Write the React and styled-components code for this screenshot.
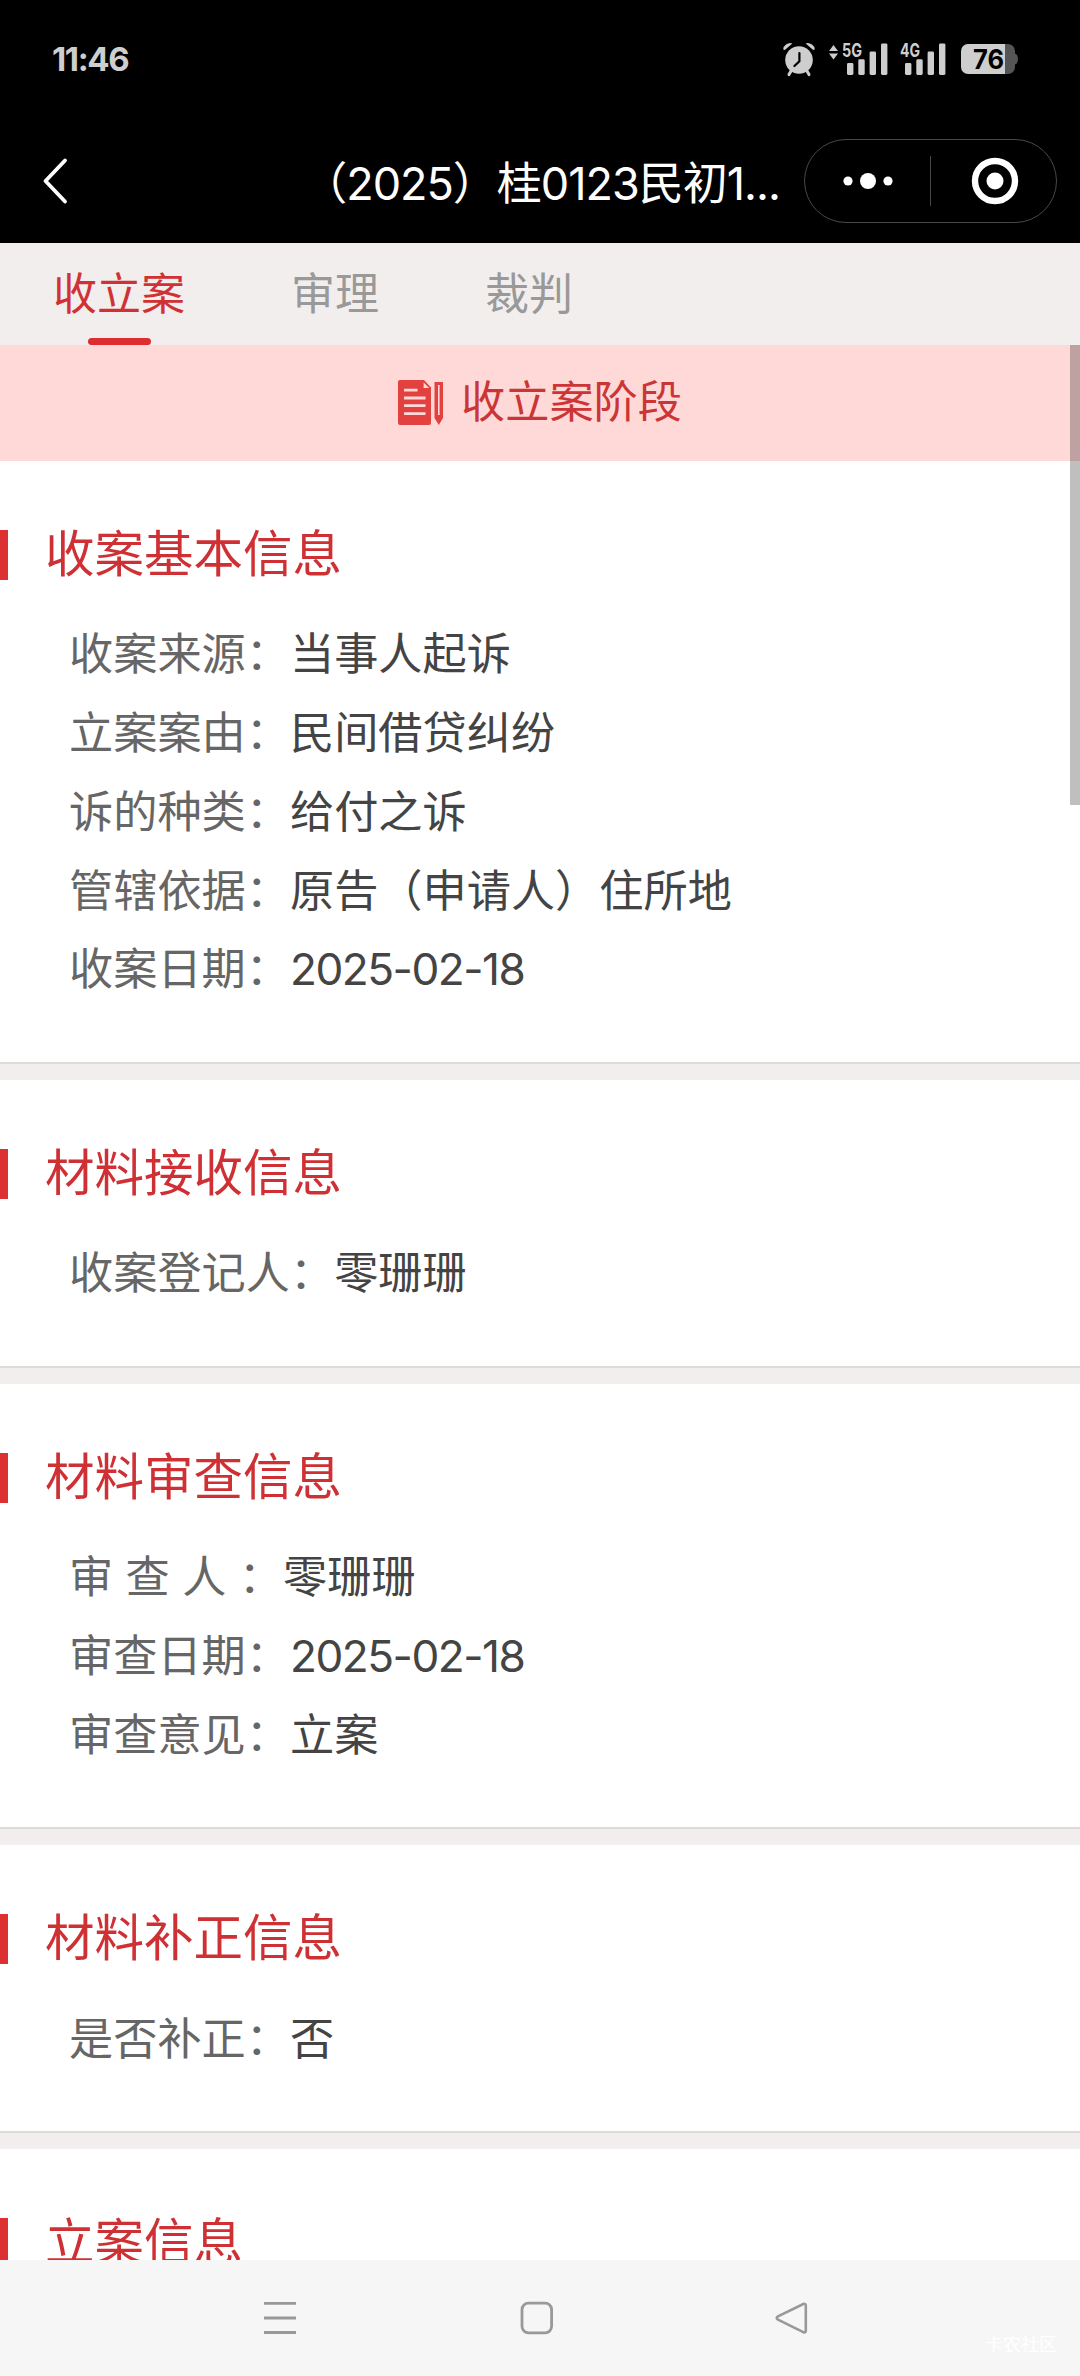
import React from 'react'
import styled, { createGlobalStyle } from 'styled-components'

const GlobalStyle = createGlobalStyle`
    * {
        box-sizing: border-box;
    }

    body {
        margin: 0;
        background: #fff;
        font-family: Inter, 'Noto Sans CJK SC', sans-serif;
        font-weight: 400;
    }

    svg {
        display: block;
        flex: none;
        overflow: visible;
    }
`

const Screen = styled.div`
    position: relative;
    display: flex;
    flex-direction: column;
    width: 1080px;
    height: 2376px;
    overflow: hidden;
`

const StatusBar = styled.div`
    display: flex;
    align-items: center;
    height: 118px;
    padding: 0 62px 0 52px;
    background: #000;
    color: #cecece;
`

const Clock = styled.span`
    flex: 1;
    font-size: 33px;
    font-weight: 700;
    letter-spacing: -1.4px;
`

const NavBar = styled.header`
    display: flex;
    align-items: center;
    height: 125px;
    padding: 0 23px 0 42px;
    background: #000;
    color: #fff;
`

const PageTitle = styled.h1`
    flex: 1;
    margin: 6px 24px 0 0;
    font-size: 45px;
    font-weight: 400;
    letter-spacing: -1px;
    line-height: 60px;
    text-align: right;
    white-space: nowrap;
`

const Capsule = styled.div`
    display: flex;
    align-items: center;
    width: 253px;
    height: 84px;
    border: 1px solid #484848;
    border-radius: 42px;
`

const CapsuleButton = styled.div`
    display: flex;
    flex: 1;
    align-items: center;
    justify-content: center;
`

const CapsuleDivider = styled.div`
    width: 1px;
    height: 50px;
    background: #484848;
`

const Tabs = styled.nav`
    display: flex;
    flex: none;
    height: 102px;
    background: #f2eeed;
`

const Tab = styled.div`
    display: flex;
    flex-direction: column;
    align-items: center;
    justify-content: space-between;
    padding: 19px 53px 0;
    color: ${props => (props.$active ? '#d03234' : '#999')};
    font-size: 44px;
    line-height: 64px;

    &::after {
        content: '';
        width: 63px;
        height: 7px;
        border-radius: 4px;
        background: ${props => (props.$active ? '#dd2d30' : 'transparent')};
    }
`

const Content = styled.main`
    position: relative;
    flex: 1;
    min-height: 0;
    overflow: hidden;
    background: #fff;
`

const StageBanner = styled.div`
    display: flex;
    align-items: center;
    justify-content: center;
    gap: 17px;
    height: 116px;
    background: #fed9d8;
    color: #cc3536;
    font-size: 44.2px;
    line-height: 64px;
`

const StageName = styled.span`
    margin-top: -2px;
`

const ScrollThumb = styled.div`
    position: absolute;
    top: 0;
    right: 0;
    width: 10px;
    height: 460px;
    background: rgba(0, 0, 0, 0.25);
`

const Section = styled.section`
    padding: 69px 0 52.75px;
    border-bottom: 2px solid #dcdada;
    margin-bottom: 16px;
    background: #fff;
    box-shadow: 0 16px 0 #f2eeee;
`

const SectionTitle = styled.h2`
    height: 50px;
    margin: 0 0 35.4px;
    padding-left: 37px;
    border-left: 8px solid #dd3033;
    color: #cf3034;
    font-size: 49.5px;
    font-weight: 400;
    line-height: 49px;
`

const Row = styled.div`
    display: flex;
    height: 78.75px;
    padding-left: 69px;
    font-size: 44.2px;
    line-height: 79.5px;
    white-space: pre;
`

const Label = styled.span`
    color: #666;
`

const Value = styled.span`
    color: #444;
    letter-spacing: ${props => (props.$numeric ? '-1.5px' : 'normal')};
`

const SystemBar = styled.footer`
    position: relative;
    flex: none;
    height: 116px;
    padding: 40px 270px 0 261px;
    display: flex;
    justify-content: space-between;
    background: #f6f6f6;
`

const Watermark = styled.span`
    position: absolute;
    right: 23px;
    bottom: 21px;
    color: #fff;
    font-size: 18px;
    line-height: 20px;
`

const AlarmIcon = () => (
    <svg width="32" height="36" viewBox="0 0 32 36" fill="#cecece">
        <circle cx="16" cy="19" r="13.8" />
        <path d="M.2 8.6Q-.2 6 3 3.6 6.5 1.2 9.3 2.6L1.8 8.9zM31.8 8.6Q32.2 6 29 3.6 25.5 1.2 22.7 2.6L30.2 8.9z" />
        <path d="M8 30l-2 3.6M24 30l2 3.6" stroke="#cecece" strokeWidth="3" strokeLinecap="round" />
        <path d="M16.4 12v8.2l-5 4.8" fill="none" stroke="#000" strokeWidth="2.2" strokeLinecap="round" />
    </svg>
)

const SignalIcon = ({ label, arrows }) => (
    <svg width="60" height="36" viewBox="0 0 60 36" fill="#cecece">
        {arrows && <path d="M0 10l4.5-6 4.5 6zM0 12.6h9l-4.5 6z" />}
        <text x="13" y="16" fontSize="18.5" fontWeight="700" textLength="20" lengthAdjust="spacingAndGlyphs">{label}</text>
        <rect x="18" y="22" width="6.4" height="12" rx="1.4" />
        <rect x="29.3" y="18.3" width="6.4" height="15.7" rx="1.4" />
        <rect x="40.6" y="10.5" width="6.4" height="23.5" rx="1.4" />
        <rect x="52" y="2.4" width="6.4" height="31.6" rx="1.4" />
    </svg>
)

const BatteryIcon = () => (
    <svg width="57" height="30" viewBox="0 0 57 30">
        <path d="M44 0h3a7 7 0 0 1 7 7v2.5q3 1 3 5.5t-3 5.5V23a7 7 0 0 1-7 7h-3z" fill="#555" />
        <path d="M44 0v30H7a7 7 0 0 1-7-7V7a7 7 0 0 1 7-7z" fill="#cecece" />
        <text x="12" y="25" fontSize="27" fontWeight="700" textLength="31" lengthAdjust="spacingAndGlyphs">76</text>
    </svg>
)

const StatusIcons = styled.div`
    display: flex;
    align-items: center;

    & > svg:nth-child(2) {
        margin-left: 14px;
    }

    & > svg:nth-child(3) {
        margin-left: -2px;
    }

    & > svg:nth-child(4) {
        margin-left: 14px;
    }
`

const BackIcon = () => (
    <svg width="28" height="48" viewBox="0 0 28 48" fill="none" stroke="#fff" strokeWidth="3.8" strokeLinecap="round" strokeLinejoin="round">
        <path d="M23 3.5L3.5 24 23 44.5" />
    </svg>
)

const MoreIcon = () => (
    <svg width="50" height="18" viewBox="0 0 50 18" fill="#fff">
        <circle cx="5" cy="9" r="4.6" />
        <circle cx="25" cy="9" r="8" />
        <circle cx="45" cy="9" r="4.6" />
    </svg>
)

const TargetIcon = () => (
    <svg width="50" height="48" viewBox="0 0 50 48">
        <circle cx="26" cy="24" r="20" fill="none" stroke="#fff" strokeWidth="6.4" />
        <circle cx="26" cy="24" r="8.5" fill="#fff" />
    </svg>
)

const DocumentIcon = () => (
    <svg width="46" height="46" viewBox="0 0 46 46" fill="#e3413f">
        <path d="M2 0h24l7 7.5V43a2 2 0 0 1-2 2H2a2 2 0 0 1-2-2V2a2 2 0 0 1 2-2z" />
        <path d="M25.6 2.4v5.6h5.6z" fill="#fed9d8" />
        <path d="M6 10.2h13.5M6 18h21.5M6 25.6h21.5M6 33.6h21.5" stroke="#fed9d8" strokeWidth="2.8" />
        <path d="M36.5 2h8.5v36l-4.2 7-4.3-7z" />
        <path d="M40.8 5v30" stroke="#fed9d8" strokeWidth="1.6" />
    </svg>
)

const MenuIcon = () => (
    <svg width="38" height="36" viewBox="0 0 38 36" stroke="#999" strokeWidth="2.8">
        <path d="M3 3.3h32M3 18h32M3 32.5h32" />
    </svg>
)

const HomeIcon = () => (
    <svg width="36" height="36" viewBox="0 0 36 36" fill="none" stroke="#999" strokeWidth="2.8">
        <rect x="3" y="3.2" width="29.6" height="29.6" rx="6.5" />
    </svg>
)

const TriangleIcon = () => (
    <svg width="36" height="36" viewBox="0 0 36 36" fill="none" stroke="#999" strokeWidth="2.6" strokeLinejoin="round">
        <path d="M29.3 4L4 16.4q-2.6 1.5 0 3.2l25.3 12.6q2.5.8 2.5-1.8V5.8q0-2.6-2.5-1.8z" />
    </svg>
)

const sections = [
    {
        title: '收案基本信息',
        rows: [
            ['收案来源：', '当事人起诉'],
            ['立案案由：', '民间借贷纠纷'],
            ['诉的种类：', '给付之诉'],
            ['管辖依据：', '原告（申请人）住所地'],
            ['收案日期：', '2025-02-18'],
        ],
    },
    { title: '材料接收信息', rows: [['收案登记人：', '零珊珊']] },
    {
        title: '材料审查信息',
        rows: [
            ['审 查 人 ：', '零珊珊'],
            ['审查日期：', '2025-02-18'],
            ['审查意见：', '立案'],
        ],
    },
    { title: '材料补正信息', rows: [['是否补正：', '否']] },
    { title: '立案信息', rows: [] },
]

const tabs = ['收立案', '审理', '裁判']

const App = () => {
    return (
        <Screen lang="zh-CN">
            <GlobalStyle />
            <StatusBar>
                <Clock>11:46</Clock>
                <StatusIcons>
                    <AlarmIcon />
                    <SignalIcon label="5G" arrows />
                    <SignalIcon label="4G" />
                    <BatteryIcon />
                </StatusIcons>
            </StatusBar>
            <NavBar>
                <BackIcon />
                <PageTitle>（2025）桂0123民初1...</PageTitle>
                <Capsule>
                    <CapsuleButton><MoreIcon /></CapsuleButton>
                    <CapsuleDivider />
                    <CapsuleButton><TargetIcon /></CapsuleButton>
                </Capsule>
            </NavBar>
            <Tabs>
                {tabs.map((tab, index) => (
                    <Tab key={tab} $active={index === 0}>{tab}</Tab>
                ))}
            </Tabs>
            <Content>
                <StageBanner>
                    <DocumentIcon />
                    <StageName>收立案阶段</StageName>
                </StageBanner>
                {sections.map(section => (
                    <Section key={section.title}>
                        <SectionTitle>{section.title}</SectionTitle>
                        {section.rows.map(([label, value]) => (
                            <Row key={label}>
                                <Label>{label}</Label>
                                <Value $numeric={/^\d/.test(value)}>{value}</Value>
                            </Row>
                        ))}
                    </Section>
                ))}
                <ScrollThumb />
            </Content>
            <SystemBar>
                <MenuIcon />
                <HomeIcon />
                <TriangleIcon />
                <Watermark>卡农社区</Watermark>
            </SystemBar>
        </Screen>
    )
}

export default App
